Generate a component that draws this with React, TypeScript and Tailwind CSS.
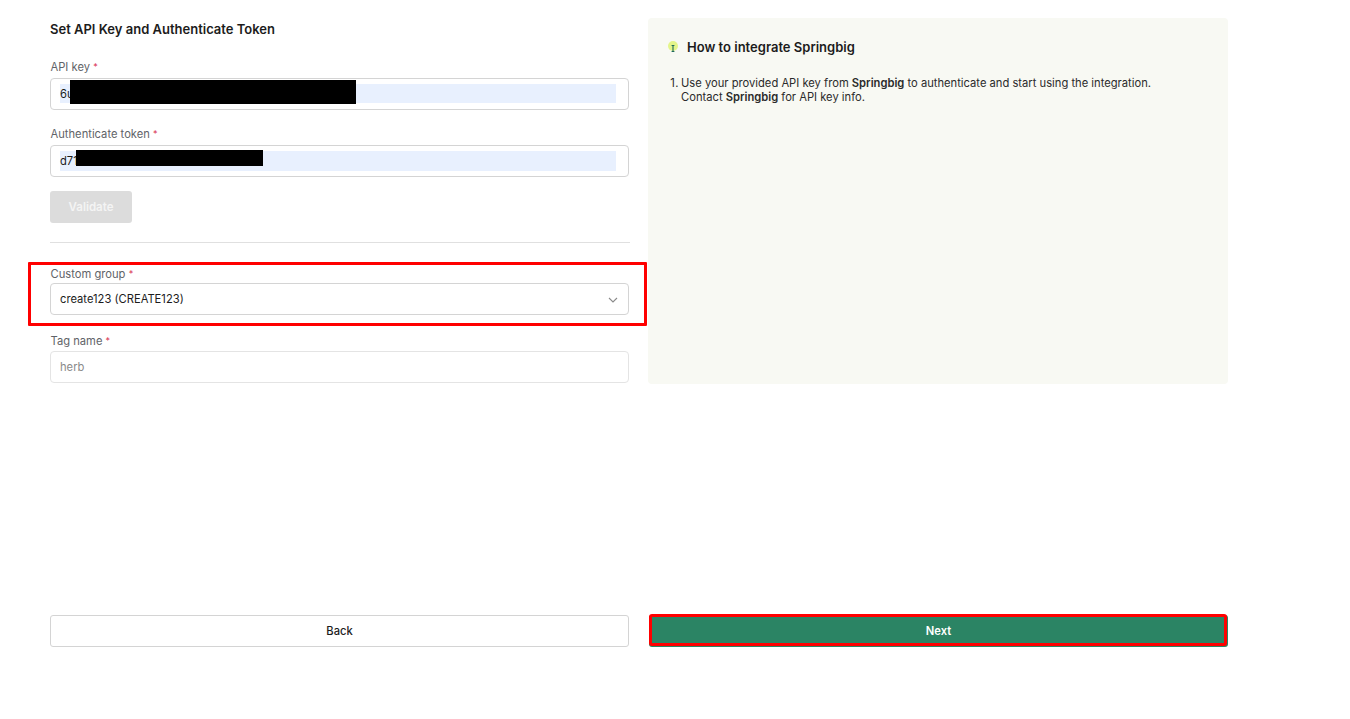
function Label({ text }: { text: string }) {
  return (
    <div className="h-[14px] pl-[0.5px] text-[11.2px] leading-[14px] text-[#5f6368]">
      {text} <span className="relative -top-[1px] text-[9px] text-[#d9304f]">*</span>
    </div>
  );
}

function FilledInput({ value, maskLeft, maskWidth, maskClass, fillClass }: { value: string; maskLeft: string; maskWidth: string; maskClass: string; fillClass: string }) {
  return (
    <div className="relative mt-[4px] h-[32px] w-[579px] rounded-[4px] border border-[#d4d4d4] bg-white px-[9px]">
      <div className={`flex items-center pt-[1px] text-[11.2px] text-[#1c1c1c] bg-[#e8f0fe] w-[556px] ${fillClass}`}>{value}</div>
      <div className={`absolute bg-black ${maskLeft} ${maskWidth} ${maskClass}`} />
    </div>
  );
}

export default function App() {
  return (
    <div className="h-[719px] bg-white font-['Inter',sans-serif] overflow-hidden">
      <div className="flex gap-[18px] pl-[50px] pt-[18px]">
        <div className="w-[580px]">
          <h2 className="mt-[4px] text-[13px] leading-[15px] font-semibold text-[#1c1c1c]">Set API Key and Authenticate Token</h2>
          <div className="mt-[23px]">
            <Label text="API key" />
            <FilledInput value="6u" maskLeft="left-[19px]" maskWidth="w-[286px]" maskClass="top-[1px] h-[24px]" fillClass="mt-[5px] h-[19px]" />
          </div>
          <div className="mt-[17px]">
            <Label text="Authenticate token" />
            <FilledInput value="d71" maskLeft="left-[25px]" maskWidth="w-[187px]" maskClass="top-[4px] h-[16px]" fillClass="mt-[5px] h-[20px]" />
          </div>
          <button className="mt-[14px] h-[32px] w-[82px] rounded-[3px] bg-[#dcdcdc] pt-[1px] text-[11.5px] font-semibold text-[#f4f4f4]">Validate</button>
          <div className="mt-[19px] h-px bg-[#e0e0e0]" />
          <div className="relative mt-[24px]">
            <Label text="Custom group" />
            <div className="mt-[2px] flex h-[32px] w-[579px] items-center justify-between rounded-[4px] border border-[#d4d4d4] pl-[9px] pr-[9px] pt-[1px] text-[11.2px] text-[#1c1c1c]">
              <span>create123 (CREATE123)</span>
              <svg width="12" height="12" viewBox="0 0 12 12" fill="none" stroke="#8a8a8a" strokeWidth="1.1">
                <path d="M2 4l4 4 4-4" />
              </svg>
            </div>
            <div className="absolute -left-[22px] -top-[5px] h-[64px] w-[619px] rounded-[1px] border-[3px] border-[#ff0000]" />
          </div>
          <div className="mt-[19px]">
            <Label text="Tag name" />
            <div className="mt-[3px] flex h-[32px] w-[579px] items-center rounded-[4px] border border-[#e4e4e4] px-[9px] pt-[1px] text-[11.2px] text-[#8a8a8a]">herb</div>
          </div>
        </div>
        <div className="h-[366px] w-[580px] rounded-[4px] bg-[#f8f9f3] pl-[20px] pt-[21px]">
          <div className="flex items-center gap-[9px]">
            <svg width="10" height="13" viewBox="0 0 10 13">
              <circle cx="5" cy="5" r="5" fill="#e4f58a" />
              <path d="M3.6 4.5h2.8M5 4.5v5.5M3.6 10.5h2.8" stroke="#1f6b58" strokeWidth="1.1" fill="none" />
            </svg>
            <h3 className="text-[13px] leading-[16px] font-semibold text-[#1c1c1c]">How to integrate Springbig</h3>
          </div>
          <ol className="mt-[21px] -ml-[1px] text-[11.2px] leading-[14px] text-[#2b2b2b]">
            <li className="flex gap-[2px]">
              <span className="w-[12px] shrink-0 text-right tracking-[0.5px]">1.</span>
              <span>
                Use your provided API key from <b className="font-semibold">Springbig</b> to authenticate and start using the integration.
                <br />
                Contact <b className="font-semibold">Springbig</b> for API key info.
              </span>
            </li>
          </ol>
        </div>
      </div>
      <div className="mt-[231px] flex gap-[20px] pl-[50px]">
        <button className="h-[32px] w-[579px] rounded-[3px] border border-[#d4d4d4] bg-white pt-[1px] text-[11.2px] font-medium text-[#1c1c1c]">Back</button>
        <div className="relative h-[32px] w-[579px]">
          <button className="h-full w-full rounded-[3px] bg-[#2b8464] pt-[1px] text-[11.2px] font-semibold text-white">Next</button>
          <div className="absolute -top-[1px] left-0 h-[32px] w-[578px] rounded-[3px] border-[3px] border-[#ff0000]" />
        </div>
      </div>
    </div>
  );
}
